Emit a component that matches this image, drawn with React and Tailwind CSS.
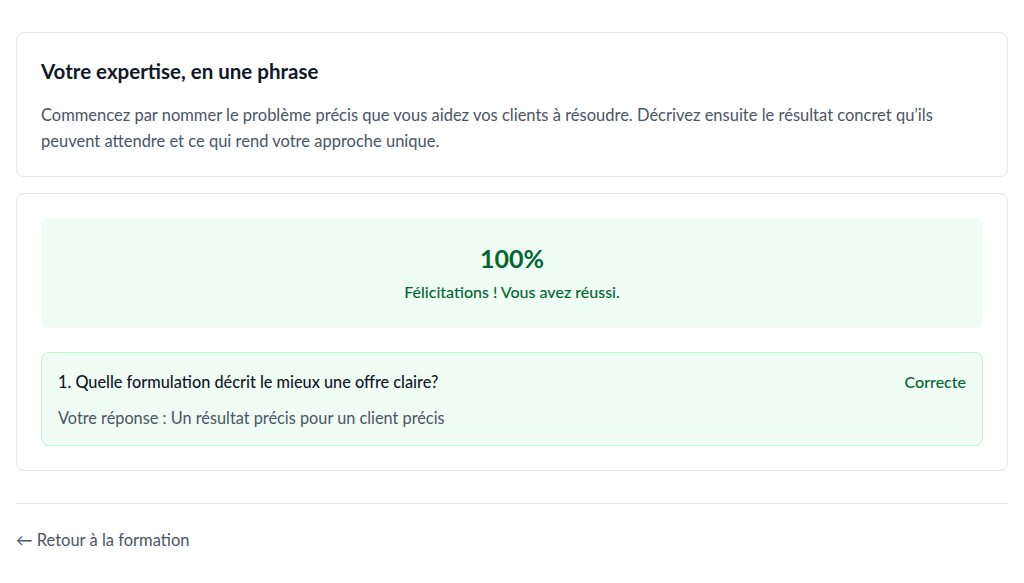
import React from 'react';

const App = () => {
  return (
    <div className="min-h-screen bg-white px-4 pt-8 pb-8" style={{ fontFamily: 'Lato, "Noto Sans", sans-serif' }}>
      {/* Intro card */}
      <div className="rounded-lg border border-gray-200 bg-white px-6 pt-[22px] pb-[22px]">
        <h1 className="text-[20.5px] font-bold leading-8 text-gray-900">Votre expertise, en une phrase</h1>
        <p className="mt-[15px] text-[16.5px] leading-[26px] text-gray-600">
          Commencez par nommer le problème précis que vous aidez vos clients à résoudre. Décrivez ensuite le résultat concret qu’ils peuvent attendre et ce qui rend votre approche unique.
        </p>
      </div>

      {/* Result card */}
      <div className="mt-4 rounded-lg border border-gray-200 bg-white p-6">
        <div className="rounded-lg bg-green-50 px-6 py-6 text-center">
          <div className="text-[25px] font-bold leading-8 text-green-800">100%</div>
          <p className="mt-[6px] text-base font-medium leading-6 text-green-800">Félicitations ! Vous avez réussi.</p>
        </div>

        <div className="mt-6 rounded-lg border border-green-200 bg-green-50 px-4 pt-[17px] pb-[15px]">
          <div className="flex items-center justify-between">
            <p className="text-[16.3px] font-medium leading-6 text-gray-900">1. Quelle formulation décrit le mieux une offre claire?</p>
            <span className="text-base font-medium leading-6 text-green-800">Correcte</span>
          </div>
          <p className="mt-3 text-[16.3px] leading-6 text-gray-600">Votre réponse : Un résultat précis pour un client précis</p>
        </div>
      </div>

      {/* Footer */}
      <div className="mt-8 border-t border-gray-200 pt-6">
        <a href="#" className="text-[16.5px] leading-6 text-gray-600">← Retour à la formation</a>
      </div>
    </div>
  );
};

export default App;
